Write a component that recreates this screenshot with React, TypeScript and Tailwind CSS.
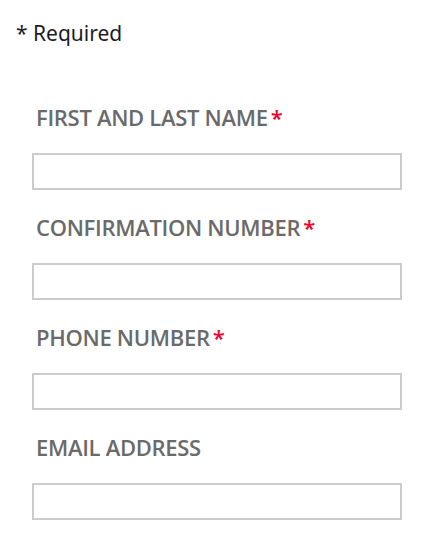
import React from "react";

const fields = [
  { label: "FIRST AND LAST NAME", required: true },
  { label: "CONFIRMATION NUMBER", required: true },
  { label: "PHONE NUMBER", required: true },
  { label: "EMAIL ADDRESS", required: false },
];

export default function App() {
  return (
    <div className="w-[438px] h-[540px] bg-white pt-[21px] font-['Open_Sans',sans-serif]">
      <div className="pl-[16px] h-[24px] text-[21px] leading-[24px] text-[#1c1c28] font-['Noto_Sans',sans-serif]">
        * Required
      </div>
      <div className="mt-[60px] pl-[32px] w-[402px] flex flex-col">
        {fields.map((f, i) => (
          <div key={f.label} className={i > 0 ? "mt-[25px]" : ""}>
            <label className="block h-[24px] pl-[4px] text-[22px] leading-[24px] font-semibold tracking-[-0.3px] text-[#6a6a6a] whitespace-nowrap">
              {f.label}
              {f.required && <span className="text-[#f0002a] ml-[3px]">*</span>}
            </label>
            <input
              type="text"
              className="block mt-[24px] w-[370px] h-[37px] border-2 border-[#cccccc] bg-white outline-none"
            />
          </div>
        ))}
      </div>
    </div>
  );
}
